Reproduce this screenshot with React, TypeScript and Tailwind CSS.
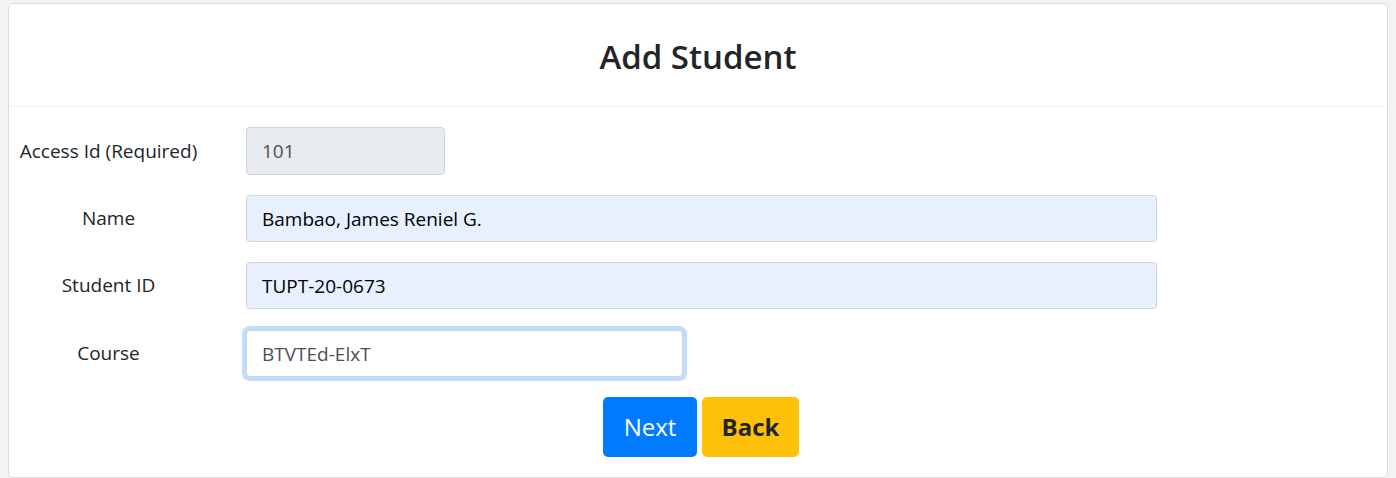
import React, { useState } from "react";

const fieldBase =
  "h-[47px] rounded-[4px] border border-[#ced4da] px-[15px] text-[19px] outline-none";

function FormRow({
  label,
  children,
  className = "",
}: {
  label: string;
  children: React.ReactNode;
  className?: string;
}) {
  return (
    <div className={`flex items-center ${className}`}>
      <label className="w-[199px] shrink-0 text-center text-[19px] text-[#212529]">
        {label}
      </label>
      <div className="ml-[38px] flex-1">{children}</div>
    </div>
  );
}

export default function App() {
  const [name, setName] = useState("Bambao, James Reniel G.");
  const [studentId, setStudentId] = useState("TUPT-20-0673");
  const [course, setCourse] = useState("BTVTEd-ElxT");

  return (
    <div
      className="min-h-[478px] bg-[#f3f3f3] px-[8px] pt-[3px]"
      style={{ fontFamily: '"Open Sans", "Noto Sans", sans-serif' }}
    >
      <div className="h-[475px] rounded-[5px] border border-[#dcdcdc] bg-white">
        {/* Header */}
        <div className="flex h-[103px] items-center justify-center border-b border-[#f1f1f1] pt-[4px]">
          <h1 className="text-[33px] font-semibold text-[#212529]">Add Student</h1>
        </div>

        {/* Form */}
        <div className="flex flex-col gap-[20px] pt-[20px]">
          <FormRow label="Access Id (Required)">
            <input
              readOnly
              value="101"
              className={`${fieldBase} h-[48px] w-[199px] bg-[#e9ecef] text-[#495057]`}
            />
          </FormRow>
          <FormRow label="Name">
            <input
              value={name}
              onChange={(e) => setName(e.target.value)}
              className={`${fieldBase} w-[911px] bg-[#e8f0fe] text-black`}
            />
          </FormRow>
          <FormRow label="Student ID">
            <input
              value={studentId}
              onChange={(e) => setStudentId(e.target.value)}
              className={`${fieldBase} w-[911px] bg-[#e8f0fe] text-black`}
            />
          </FormRow>
          <FormRow label="Course" className="mt-[1px]">
            <input
              value={course}
              onChange={(e) => setCourse(e.target.value)}
              className={`${fieldBase} w-[437px] border-[#80bdff] bg-white text-[#495057] shadow-[0_0_0_4px_rgba(0,123,255,0.25)]`}
            />
          </FormRow>
        </div>

        {/* Actions */}
        <div className="mt-[20px] flex justify-center gap-[5px] pl-[6px]">
          <button className="h-[60px] w-[94px] rounded-[5px] bg-[#007bff] text-[24px] text-white">
            Next
          </button>
          <button className="h-[60px] w-[97px] rounded-[5px] bg-[#ffc107] text-[24px] font-bold text-[#212529]">
            Back
          </button>
        </div>
      </div>
    </div>
  );
}
